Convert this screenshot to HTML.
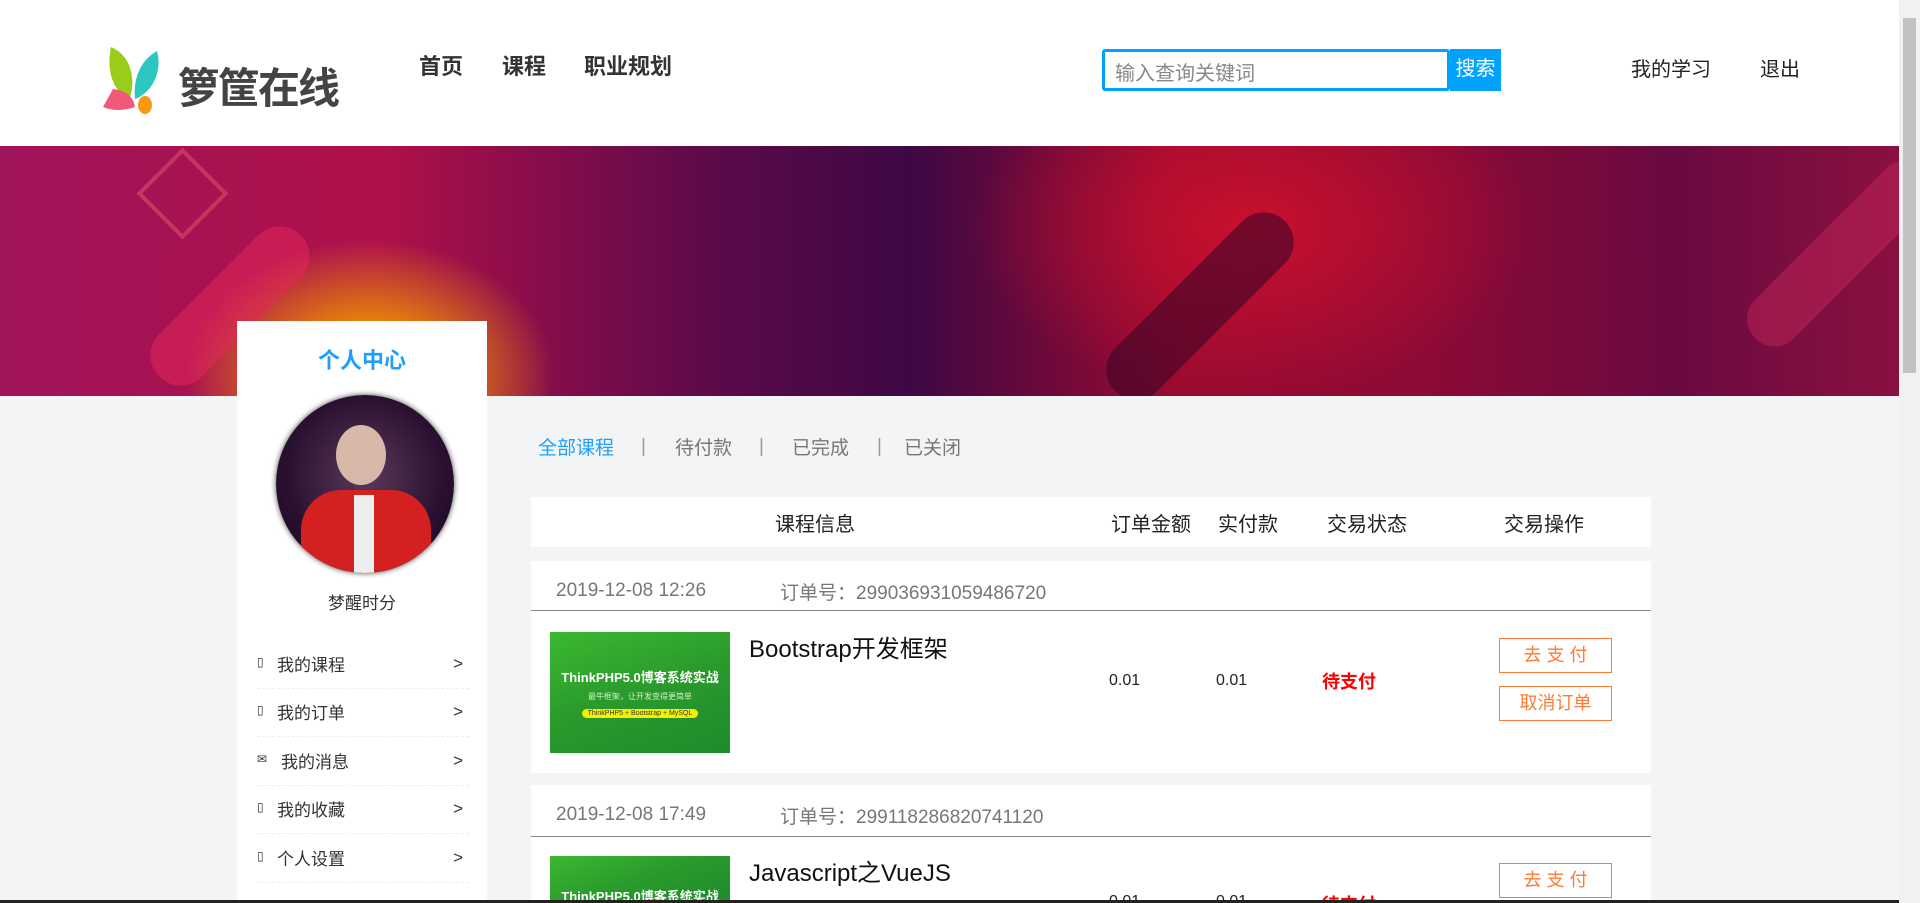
<!DOCTYPE html>
<html><head><meta charset="utf-8"><style>
*{margin:0;padding:0;box-sizing:border-box}
html,body{width:1920px;height:903px;overflow:hidden}
body{background:#f3f4f6;font-family:"Liberation Sans","Noto Sans CJK SC",sans-serif;color:#222}
#w{position:relative;width:1920px;height:903px;overflow:hidden}
.a{position:absolute;white-space:nowrap}
header{position:absolute;left:0;top:0;width:1899px;height:146px;background:#fff}
.banner{position:absolute;left:0;top:146px;width:1899px;height:250px;overflow:hidden;
background:radial-gradient(ellipse 230px 170px at 370px 230px,#e8d000 0%,#e07a10 35%,rgba(200,20,60,0) 80%),
radial-gradient(ellipse 400px 250px at 1250px 80px,#c8102e 0%,rgba(180,10,50,0) 70%),
linear-gradient(90deg,#a0145a 0%,#b0104a 20%,#5a0a4a 38%,#3e0844 48%,#9a0a30 62%,#8c0a36 75%,#6a0a40 88%,#8a1040 100%)}
.scroll{position:absolute;left:1899px;top:0;width:21px;height:903px;background:#f1f1f1}
.scroll i{position:absolute;left:4px;top:18px;width:13px;height:355px;background:#c1c1c1}
.side{position:absolute;left:237px;top:321px;width:250px;height:582px;background:#fff;overflow:hidden}
.mi{position:absolute;left:20px;width:212px;height:48px;border-bottom:1px dashed #eee;font-size:17px;color:#333}
.mi span{position:absolute;top:10px}
.mi .g{top:13px}
.box{position:absolute;left:531px;width:1120px;background:#fff}
.btn{position:absolute;left:1499px;width:113px;height:35px;border:1px solid #ff7a35;color:#ff7a35;font-size:18px;text-align:center;line-height:33px;background:#fff}
.img{position:absolute;left:550px;width:180px;height:121px;background:linear-gradient(160deg,#3cb830 0%,#2a9a2c 50%,#1f8a2c 100%);color:#fff;text-align:center;overflow:hidden}
.img b{display:block;font-size:13px;margin-top:35px}
.img s{display:block;text-decoration:none;font-size:8px;color:#d8f0c0;margin-top:5px}
.img u{display:inline-block;text-decoration:none;font-size:7px;background:#f5f000;color:#333;border-radius:6px;padding:1px 6px;margin-top:4px}
</style></head><body><div id="w">
<header>
<svg class="a" style="left:101px;top:45px" width="72" height="70" viewBox="0 0 72 70"><path d="M10 2 C34 12 34 42 28 54 C12 47 5 25 10 2Z" fill="#9acd1a"/><path d="M56 6 C62 28 50 48 34 54 C32 36 38 16 56 6Z" fill="#2ec6c0"/><path d="M2 62 L12 44 C24 46 32 50 34 62 C22 66 12 66 2 62Z" fill="#f2587a"/><ellipse cx="44" cy="60" rx="7" ry="9" fill="#f79a12"/></svg>
<div class="a" style="left:178px;top:55px;font-size:42px;font-weight:bold;color:#444;letter-spacing:-2px">箩筐在线</div>
<div class="a" style="left:419px;top:49px;font-size:22px;font-weight:bold;color:#333">首页</div>
<div class="a" style="left:502px;top:49px;font-size:22px;font-weight:bold;color:#333">课程</div>
<div class="a" style="left:584px;top:49px;font-size:22px;font-weight:bold;color:#333">职业规划</div>
<div class="a" style="left:1102px;top:49px;width:348px;height:42px;border:3px solid #00a2ff;border-radius:3px;font-size:20px;color:#888;padding:5px 0 0 10px">输入查询关键词</div>
<div class="a" style="left:1450px;top:49px;width:51px;height:42px;background:#00a2ff;color:#fff;font-size:20px;text-align:center;line-height:40px">搜索</div>
<div class="a" style="left:1631px;top:53px;font-size:20px;color:#222">我的学习</div>
<div class="a" style="left:1760px;top:53px;font-size:20px;color:#222">退出</div>
</header>
<div class="banner">
<div class="a" style="left:150px;top:15px;width:65px;height:65px;border:4px solid rgba(255,120,120,.35);transform:rotate(45deg)"></div>
<div class="a" style="left:130px;top:130px;width:200px;height:60px;border-radius:30px;background:rgba(230,40,90,.5);transform:rotate(-45deg)"></div>
<div class="a" style="left:1080px;top:130px;width:240px;height:60px;border-radius:30px;background:rgba(60,5,40,.6);transform:rotate(-45deg)"></div>
<div class="a" style="left:1720px;top:80px;width:240px;height:55px;border-radius:28px;background:rgba(200,40,90,.45);transform:rotate(-45deg)"></div>
</div>
<div class="scroll"><i></i></div>
<div class="side">
<div class="a" style="left:0;width:250px;top:22px;text-align:center;font-size:22px;font-weight:bold;color:#1e9fff">个人中心</div>
<div class="a" style="left:39px;top:74px;width:178px;height:178px;border-radius:50%;background:radial-gradient(circle at 50% 45%,#5a3a5a 0%,#2a1030 60%,#100818 100%);box-shadow:0 0 6px #444;overflow:hidden">
<div class="a" style="left:60px;top:30px;width:50px;height:60px;border-radius:50%;background:#d8b8a8"></div>
<div class="a" style="left:25px;top:95px;width:130px;height:83px;border-radius:40px 40px 0 0;background:#d42020"></div>
<div class="a" style="left:78px;top:100px;width:20px;height:78px;background:#eee"></div>
</div>
<div class="a" style="left:0;width:250px;top:268px;text-align:center;font-size:17px;color:#333">梦醒时分</div>
<div class="mi" style="top:320px"><span style="left:0;font-size:12px;top:14px">▯</span><span style="left:20px">我的课程</span><span class="g" style="right:6px">&gt;</span></div>
<div class="mi" style="top:368px"><span style="left:0;font-size:12px;top:14px">▯</span><span style="left:20px">我的订单</span><span class="g" style="right:6px">&gt;</span></div>
<div class="mi" style="top:417px"><span style="left:0;font-size:12px;top:14px">✉</span><span style="left:24px">我的消息</span><span class="g" style="right:6px">&gt;</span></div>
<div class="mi" style="top:465px"><span style="left:0;font-size:12px;top:14px">▯</span><span style="left:20px">我的收藏</span><span class="g" style="right:6px">&gt;</span></div>
<div class="mi" style="top:514px"><span style="left:0;font-size:12px;top:14px">▯</span><span style="left:20px">个人设置</span><span class="g" style="right:6px">&gt;</span></div>
</div>
<div class="a" style="left:538px;top:433px;font-size:19px;color:#1e9fff">全部课程</div>
<div class="a" style="left:641px;top:436px;font-size:19px;color:#999">|</div>
<div class="a" style="left:675px;top:433px;font-size:19px;color:#777">待付款</div>
<div class="a" style="left:759px;top:436px;font-size:19px;color:#999">|</div>
<div class="a" style="left:792px;top:433px;font-size:19px;color:#777">已完成</div>
<div class="a" style="left:877px;top:436px;font-size:19px;color:#999">|</div>
<div class="a" style="left:904px;top:433px;font-size:19px;color:#777">已关闭</div>
<div class="box" style="top:497px;height:50px">
<div class="a" style="left:244px;top:11px;font-size:20px">课程信息</div>
<div class="a" style="left:580px;top:11px;font-size:20px">订单金额</div>
<div class="a" style="left:687px;top:11px;font-size:20px">实付款</div>
<div class="a" style="left:796px;top:11px;font-size:20px">交易状态</div>
<div class="a" style="left:973px;top:11px;font-size:20px">交易操作</div>
</div>
<div class="box" style="top:561px;height:212px">
<div class="a" style="left:25px;top:19px;font-size:19px;color:#777">2019-12-08 12:26</div>
<div class="a" style="left:249px;top:17px;font-size:19px;color:#777">订单号：299036931059486720</div>
<div class="a" style="left:0;top:49px;width:1120px;height:1px;background:#888"></div>
</div>
<div class="img" style="top:632px"><b>ThinkPHP5.0博客系统实战</b><s>最牛框架，让开发变得更简单</s><u>ThinkPHP5 + Bootstrap + MySQL</u></div>
<div class="a" style="left:749px;top:629px;font-size:24px;color:#111">Bootstrap开发框架</div>
<div class="a" style="left:1109px;top:672px;font-size:16px">0.01</div>
<div class="a" style="left:1216px;top:672px;font-size:16px">0.01</div>
<div class="a" style="left:1322px;top:668px;font-size:18px;font-weight:bold;color:#f00">待支付</div>
<div class="btn" style="top:638px">去 支 付</div>
<div class="btn" style="top:686px">取消订单</div>
<div class="box" style="top:785px;height:118px;overflow:hidden">
<div class="a" style="left:25px;top:19px;font-size:19px;color:#777">2019-12-08 17:49</div>
<div class="a" style="left:249px;top:17px;font-size:19px;color:#777">订单号：299118286820741120</div>
<div class="a" style="left:0;top:51px;width:1120px;height:1px;background:#888"></div>
<div class="img" style="left:19px;top:71px;height:47px"><b style="margin-top:30px">ThinkPHP5.0博客系统实战</b></div>
<div class="a" style="left:218px;top:68px;font-size:24px;color:#111">Javascript之VueJS</div>
<div class="a" style="left:578px;top:108px;font-size:16px">0.01</div>
<div class="a" style="left:685px;top:108px;font-size:16px">0.01</div>
<div class="a" style="left:791px;top:106px;font-size:18px;font-weight:bold;color:#f00">待支付</div>
<div class="btn" style="left:968px;top:78px">去 支 付</div>
</div>
<div class="a" style="left:0;top:900px;width:1899px;height:3px;background:#222"></div>
</div></body></html>
